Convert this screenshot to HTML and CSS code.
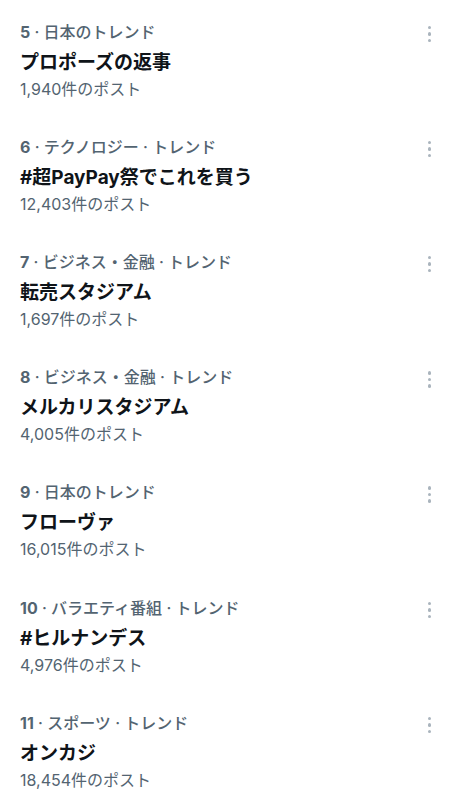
FILE: index.html
```html
<!DOCTYPE html>
<html lang="ja">
<head>
<meta charset="utf-8">
<link rel="stylesheet" href="styles.css">
</head>
<body>
<div class="list">
  <div class="item">
    <div class="text">
      <div class="meta"><span class="rank">5</span> · 日本のトレンド</div>
      <div class="title">プロポーズの返事</div>
      <div class="count">1,940件のポスト</div>
    </div>
    <div class="more"><span></span><span></span><span></span></div>
  </div>
  <div class="item">
    <div class="text">
      <div class="meta"><span class="rank">6</span> · テクノロジー · トレンド</div>
      <div class="title">#超PayPay祭でこれを買う</div>
      <div class="count">12,403件のポスト</div>
    </div>
    <div class="more"><span></span><span></span><span></span></div>
  </div>
  <div class="item">
    <div class="text">
      <div class="meta"><span class="rank">7</span> · ビジネス・金融 · トレンド</div>
      <div class="title">転売スタジアム</div>
      <div class="count">1,697件のポスト</div>
    </div>
    <div class="more"><span></span><span></span><span></span></div>
  </div>
  <div class="item">
    <div class="text">
      <div class="meta"><span class="rank">8</span> · ビジネス・金融 · トレンド</div>
      <div class="title">メルカリスタジアム</div>
      <div class="count">4,005件のポスト</div>
    </div>
    <div class="more"><span></span><span></span><span></span></div>
  </div>
  <div class="item">
    <div class="text">
      <div class="meta"><span class="rank">9</span> · 日本のトレンド</div>
      <div class="title">フローヴァ</div>
      <div class="count">16,015件のポスト</div>
    </div>
    <div class="more"><span></span><span></span><span></span></div>
  </div>
  <div class="item">
    <div class="text">
      <div class="meta"><span class="rank">10</span> · バラエティ番組 · トレンド</div>
      <div class="title">#ヒルナンデス</div>
      <div class="count">4,976件のポスト</div>
    </div>
    <div class="more"><span></span><span></span><span></span></div>
  </div>
  <div class="item">
    <div class="text">
      <div class="meta"><span class="rank">11</span> · スポーツ · トレンド</div>
      <div class="title">オンカジ</div>
      <div class="count">18,454件のポスト</div>
    </div>
    <div class="more"><span></span><span></span><span></span></div>
  </div>
</div>
</body>
</html>
```
FILE: styles.css
```css
html, body {
  margin: 0;
  padding: 0;
  background: #ffffff;
}
body {
  font-family: Inter, "Noto Sans CJK JP", sans-serif;
  color: #0f1419;
}
.list {
  padding-top: 4px;
  display: flex;
  flex-direction: column;
}
.item {
  display: flex;
  justify-content: space-between;
  align-items: flex-start;
  padding: 16.6px 20px 16.6px 20px;
}
.text {
  display: flex;
  flex-direction: column;
}
.meta {
  font-size: 16px;
  line-height: 22px;
  color: #536471;
  font-weight: 500;
}
.rank {
  font-weight: 700;
}
.title {
  margin-top: 6px;
  font-size: 19px;
  line-height: 27px;
  font-weight: 700;
  color: #0f1419;
}
.count {
  font-size: 16px;
  line-height: 27px;
  color: #536471;
}
.more {
  display: flex;
  flex-direction: column;
  gap: 3px;
  padding-top: 5px;
  margin-right: 4px;
}
.more span {
  width: 3.5px;
  height: 3.5px;
  border-radius: 50%;
  background: #aab4bd;
}
```
